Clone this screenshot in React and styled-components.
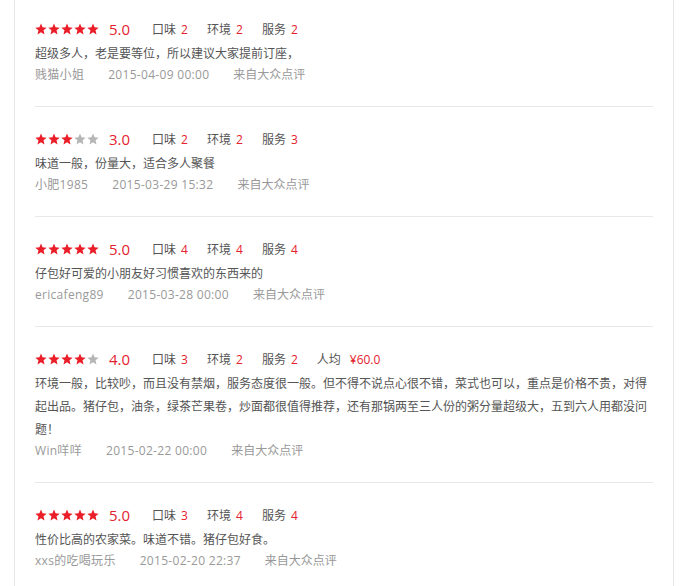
import React from "react";
import styled, { createGlobalStyle } from "styled-components";

const Global = createGlobalStyle`
  html, body { margin: 0; padding: 0; background: #fff; }
  body { font-family: "Liberation Sans", "Noto Sans CJK SC", Arial, sans-serif; }
`;

const Panel = styled.div`
  margin-left: 14px;
  width: 618px;
  padding: 0 20px;
  border-left: 1px solid #e6e6e6;
  border-right: 1px solid #e6e6e6;
  min-height: 586px;
  box-sizing: content-box;
`;

const Item = styled.div`
  padding: 20px 0 21px;
  border-bottom: 1px solid #e8e8e8;
  &:first-child { padding-top: 17px; }
  &:last-child { border-bottom: none; }
`;

const RatingRow = styled.div`
  display: flex;
  align-items: center;
  height: 24px;
  font-size: 12px;
  color: #555;
`;

const Stars = styled.div`
  display: flex;
  gap: 1px;
  margin-right: 10px;
`;

const Score = styled.span`
  font-size: 15px;
  color: #e4222d;
  margin-right: 22px;
  font-family: "Open Sans", "Liberation Sans", sans-serif;
`;

const Sub = styled.span`
  margin-right: 19px;
  font-family: "Noto Sans CJK SC", sans-serif;
  font-size: 12px;
  color: #555;
`;

const Num = styled.span`
  color: #e4222d;
  margin-left: ${(p) => (p.$wide ? 9 : 5)}px;
  font-family: "Open Sans", "Liberation Sans", sans-serif;
`;

const Content = styled.p`
  margin: 0;
  font-size: 12px;
  line-height: 23px;
  color: #555;
  font-family: "Noto Sans CJK SC", sans-serif;
`;

const Meta = styled.div`
  display: flex;
  gap: 24px;
  font-size: 12px;
  line-height: 21px;
  color: #999;
  font-family: "Open Sans", "Noto Sans CJK SC", sans-serif;
`;

const MetaLatin = styled.span`
  letter-spacing: 0.3px;
`;

const Star = ({ on }) => (
  <svg width="12" height="12" viewBox="0 0 24 24">
    <polygon
      points="12,1 15.1,8.6 23.4,9.3 17.1,14.6 19,22.8 12,18.4 5,22.8 6.9,14.6 0.6,9.3 8.9,8.6"
      fill={on ? "#ea1e28" : "#b5b5b5"}
    />
  </svg>
);

const reviews = [
  { stars: 5, score: "5.0", t: 2, e: 2, s: 2, text: "超级多人，老是要等位，所以建议大家提前订座，", user: "贱猫小姐", date: "2015-04-09 00:00" },
  { stars: 3, score: "3.0", t: 2, e: 2, s: 3, text: "味道一般，份量大，适合多人聚餐", user: "小肥1985", date: "2015-03-29 15:32" },
  { stars: 5, score: "5.0", t: 4, e: 4, s: 4, text: "仔包好可爱的小朋友好习惯喜欢的东西来的", user: "ericafeng89", date: "2015-03-28 00:00" },
  { stars: 4, score: "4.0", t: 3, e: 2, s: 2, price: "¥60.0", text: "环境一般，比较吵，而且没有禁烟，服务态度很一般。但不得不说点心很不错，菜式也可以，重点是价格不贵，对得起出品。猪仔包，油条，绿茶芒果卷，炒面都很值得推荐，还有那锅两至三人份的粥分量超级大，五到六人用都没问题！", user: "Win咩咩", date: "2015-02-22 00:00" },
  { stars: 5, score: "5.0", t: 3, e: 4, s: 4, text: "性价比高的农家菜。味道不错。猪仔包好食。", user: "xxs的吃喝玩乐", date: "2015-02-20 22:37" },
];

export default function App() {
  return (
    <>
      <Global />
      <Panel>
        {reviews.map((r, i) => (
          <Item key={i}>
            <RatingRow>
              <Stars>
                {[0, 1, 2, 3, 4].map((k) => (
                  <Star key={k} on={k < r.stars} />
                ))}
              </Stars>
              <Score>{r.score}</Score>
              <Sub>口味<Num>{r.t}</Num></Sub>
              <Sub>环境<Num>{r.e}</Num></Sub>
              <Sub>服务<Num>{r.s}</Num></Sub>
              {r.price && <Sub>人均<Num $wide>{r.price}</Num></Sub>}
            </RatingRow>
            <Content>{r.text}</Content>
            <Meta>
              <MetaLatin>{r.user}</MetaLatin>
              <MetaLatin>{r.date}</MetaLatin>
              <span>来自大众点评</span>
            </Meta>
          </Item>
        ))}
      </Panel>
    </>
  );
}
